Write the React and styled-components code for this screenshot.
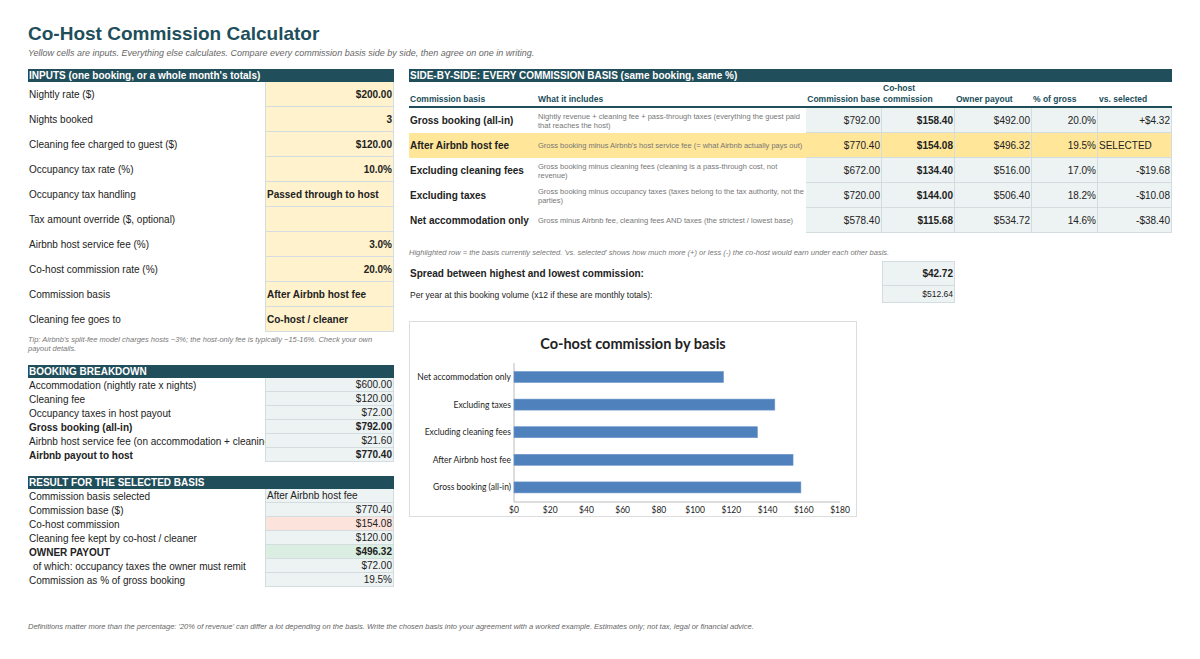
import React from "react";
import styled, { createGlobalStyle } from "styled-components";

const G = createGlobalStyle`
  body { margin: 0; background: #fff; font-family: "Liberation Sans", Arial, sans-serif; color: #222; }
`;
const TEAL = "#204e5a";
const BORDER = "#d3dde0";

const Page = styled.div`
  width: 1200px; height: 659px; box-sizing: border-box; padding: 23px 28px 0 28px; position: relative;
`;
const Title = styled.h1`
  margin: 0; font-size: 19px; font-weight: bold; color: ${TEAL}; line-height: 22px;
`;
const Sub = styled.div`
  font-size: 9px; font-style: italic; color: #666; margin-top: 3px; line-height: 11px;
`;
const Cols = styled.div`
  display: flex; gap: 15px; margin-top: 10px; align-items: flex-start;
`;
const Left = styled.div` width: 366px; `;
const Right = styled.div` width: 763px; `;
const Bar = styled.div`
  background: ${TEAL}; color: #fff; font-weight: bold; font-size: 10px; height: 13px; line-height: 13px; padding-left: 1px;
`;
const Row = styled.div`
  display: grid; grid-template-columns: 237px 129px; height: ${p => p.h}px; align-items: center; font-size: ${p => p.fs || 10}px;
`;
const Label = styled.div`
  padding-left: 1px; font-weight: ${p => p.bold ? "bold" : "normal"}; padding-left: ${p => p.indent ? 5 : 1}px; white-space: nowrap;
`;
const Val = styled.div`
  height: 100%; box-sizing: border-box; display: flex; align-items: center; justify-content: ${p => p.leftAlign ? "flex-start" : "flex-end"};
  background: ${p => p.bg}; border: 1px solid ${BORDER}; border-top: none; padding: 0 1px;
  font-weight: ${p => p.bold ? "bold" : "normal"}; white-space: nowrap;
`;
const Tip = styled.div`
  font-size: 7.5px; font-style: italic; color: #777; line-height: 9px; margin-top: 3px; height: 25px;
`;
const Gap = styled.div` height: ${p => p.h}px; `;

const inputs = [
  ["Nightly rate ($)", "$200.00"], ["Nights booked", "3"], ["Cleaning fee charged to guest ($)", "$120.00"],
  ["Occupancy tax rate (%)", "10.0%"], ["Occupancy tax handling", "Passed through to host", true],
  ["Tax amount override ($, optional)", ""], ["Airbnb host service fee (%)", "3.0%"],
  ["Co-host commission rate (%)", "20.0%"], ["Commission basis", "After Airbnb host fee", true],
  ["Cleaning fee goes to", "Co-host / cleaner", true],
];
const breakdown = [
  ["Accommodation (nightly rate x nights)", "$600.00"], ["Cleaning fee", "$120.00"],
  ["Occupancy taxes in host payout", "$72.00"], ["Gross booking (all-in)", "$792.00", true],
  ["Airbnb host service fee (on accommodation + cleaning)", "$21.60"], ["Airbnb payout to host", "$770.40", true],
];
const CALC = "#edf3f3";
const result = [
  ["Commission basis selected", "After Airbnb host fee", false, CALC, true],
  ["Commission base ($)", "$770.40", false, CALC],
  ["Co-host commission", "$154.08", false, "#fce3dc"],
  ["Cleaning fee kept by co-host / cleaner", "$120.00", false, CALC],
  ["OWNER PAYOUT", "$496.32", true, "#dbeee2"],
  ["of which: occupancy taxes the owner must remit", "$72.00", false, CALC, false, true],
  ["Commission as % of gross booking", "19.5%", false, CALC],
];

const TW = "128px 269px 76px 73px 77px 66px 74px";
const THead = styled.div`
  display: grid; grid-template-columns: ${TW}; height: 26px; align-items: end; font-size: 8.5px; font-weight: bold; color: ${TEAL};
  border-bottom: 2px solid ${TEAL}; box-sizing: border-box; padding-bottom: 1px;
`;
const TH = styled.div` text-align: ${p => p.right ? "right" : "left"}; padding-right: 2px; line-height: 11px; padding-left: ${p => p.right ? 0 : 1}px; `;
const TRow = styled.div`
  display: grid; grid-template-columns: ${TW}; height: 25px; background: ${p => p.sel ? "#ffe699" : "transparent"};
`;
const TC = styled.div`
  display: flex; align-items: center; box-sizing: border-box; font-size: ${p => p.fs || 10}px;
  justify-content: ${p => p.right ? "flex-end" : "flex-start"}; padding: 0 1px;
  font-weight: ${p => p.bold ? "bold" : "normal"}; color: ${p => p.muted ? "#777" : "#222"}; line-height: 9px;
  background: ${p => p.calc && !p.sel ? CALC : "transparent"};
  border-right: ${p => p.calc ? `1px solid ${BORDER}` : "none"}; border-bottom: ${p => p.calc ? `1px solid ${BORDER}` : "none"};
  white-space: ${p => p.wrap ? "normal" : "nowrap"};
`;
const rows = [
  ["Gross booking (all-in)", "Nightly revenue + cleaning fee + pass-through taxes (everything the guest paid that reaches the host)", "$792.00", "$158.40", "$492.00", "20.0%", "+$4.32"],
  ["After Airbnb host fee", "Gross booking minus Airbnb's host service fee (= what Airbnb actually pays out)", "$770.40", "$154.08", "$496.32", "19.5%", "SELECTED"],
  ["Excluding cleaning fees", "Gross booking minus cleaning fees (cleaning is a pass-through cost, not revenue)", "$672.00", "$134.40", "$516.00", "17.0%", "-$19.68"],
  ["Excluding taxes", "Gross booking minus occupancy taxes (taxes belong to the tax authority, not the parties)", "$720.00", "$144.00", "$506.40", "18.2%", "-$10.08"],
  ["Net accommodation only", "Gross minus Airbnb fee, cleaning fees AND taxes (the strictest / lowest base)", "$578.40", "$115.68", "$534.72", "14.6%", "-$38.40"],
];
const Note = styled.div` font-size: 7.5px; font-style: italic; color: #777; margin-top: 15px; height: 13px; `;
const SRow = styled.div`
  display: grid; grid-template-columns: 473px 73px; height: ${p => p.h}px; font-size: ${p => p.fs}px; font-weight: ${p => p.bold ? "bold" : "normal"};
`;
const SVal = styled.div`
  background: ${CALC}; border: 1px solid ${BORDER}; ${p => p.first ? "" : "border-top: none;"} display: flex; align-items: center; justify-content: flex-end; padding-right: 1px; box-sizing: border-box;
`;
const SLab = styled.div` display: flex; align-items: center; padding-left: 1px; `;
const ChartBox = styled.div`
  width: 448px; height: 196px; margin-top: 18px; border: 1px solid #ddd; box-sizing: border-box; position: relative;
`;
const ChartTitle = styled.div`
  text-align: center; font-family: Lato, "Open Sans", sans-serif; font-weight: bold; font-size: 14.5px; margin-top: 13px;
`;
const Footer = styled.div`
  position: absolute; left: 28px; top: 622px; font-size: 7.5px; font-style: italic; color: #666;
`;

const bars = [["Net accommodation only", 115.68], ["Excluding taxes", 144], ["Excluding cleaning fees", 134.4], ["After Airbnb host fee", 154.08], ["Gross booking (all-in)", 158.4]];

function Chart() {
  const x0 = 104, k = 326 / 180;
  return (
    <ChartBox>
      <ChartTitle>Co-host commission by basis</ChartTitle>
      <svg width="448" height="196" style={{ position: "absolute", left: 0, top: 0 }} fontFamily="Lato, sans-serif" fontSize="8.5">
        <line x1={x0} y1={41} x2={x0} y2={180} stroke="#bbb" />
        <line x1={x0} y1={180} x2={x0 + 326} y2={180} stroke="#bbb" />
        {bars.map(([n, v], i) => {
          const cy = 55 + i * 27.6;
          return (
            <g key={n}>
              <rect x={x0} y={cy - 5.5} width={v * k} height={11} fill="#4f81bd" stroke="#6f97cc" strokeWidth="0.6" />
              <text x={x0 - 3} y={cy + 3} textAnchor="end" fill="#222">{n}</text>
            </g>
          );
        })}
        {[0, 20, 40, 60, 80, 100, 120, 140, 160, 180].map(t => (
          <text key={t} x={x0 + t * k} y={191} textAnchor="middle" fill="#222">${t}</text>
        ))}
      </svg>
    </ChartBox>
  );
}

export default function App() {
  return (
    <Page>
      <G />
      <Title>Co-Host Commission Calculator</Title>
      <Sub>Yellow cells are inputs. Everything else calculates. Compare every commission basis side by side, then agree on one in writing.</Sub>
      <Cols>
        <Left>
          <Bar>INPUTS (one booking, or a whole month's totals)</Bar>
          {inputs.map(([l, v, b]) => (
            <Row key={l} h={25}>
              <Label>{l}</Label>
              <Val bg="#fff2cc" bold leftAlign={b}>{v}</Val>
            </Row>
          ))}
          <Tip>Tip: Airbnb's split-fee model charges hosts ~3%; the host-only fee is typically ~15-16%. Check your own payout details.</Tip>
          <Gap h={5} />
          <Bar>BOOKING BREAKDOWN</Bar>
          {breakdown.map(([l, v, b]) => (
            <Row key={l} h={14}>
              <Label bold={b}>{l}</Label>
              <Val bg={CALC} bold={b}>{v}</Val>
            </Row>
          ))}
          <Gap h={14} />
          <Bar>RESULT FOR THE SELECTED BASIS</Bar>
          {result.map(([l, v, b, bg, la, ind]) => (
            <Row key={l} h={14}>
              <Label bold={b} indent={ind}>{l}</Label>
              <Val bg={bg} bold={b} leftAlign={la}>{v}</Val>
            </Row>
          ))}
        </Left>
        <Right>
          <Bar>SIDE-BY-SIDE: EVERY COMMISSION BASIS (same booking, same %)</Bar>
          <THead>
            <TH>Commission basis</TH><TH>What it includes</TH><TH right>Commission base</TH>
            <TH>Co-host<br />commission</TH><TH>Owner payout</TH><TH>% of gross</TH><TH>vs. selected</TH>
          </THead>
          {rows.map((r, i) => {
            const sel = i === 1;
            return (
              <TRow key={r[0]} sel={sel}>
                <TC bold>{r[0]}</TC>
                <TC muted fs={7.5} wrap>{r[1]}</TC>
                <TC calc sel={sel} right>{r[2]}</TC>
                <TC calc sel={sel} right bold>{r[3]}</TC>
                <TC calc sel={sel} right>{r[4]}</TC>
                <TC calc sel={sel} right>{r[5]}</TC>
                {sel ? <TC calc sel>{r[6]}</TC> : <TC calc right>{r[6]}</TC>}
              </TRow>
            );
          })}
          <Note>Highlighted row = the basis currently selected. 'vs. selected' shows how much more (+) or less (-) the co-host would earn under each other basis.</Note>
          <SRow h={25} fs={10} bold><SLab>Spread between highest and lowest commission:</SLab><SVal first>$42.72</SVal></SRow>
          <SRow h={17} fs={8.5}><SLab>Per year at this booking volume (x12 if these are monthly totals):</SLab><SVal>$512.64</SVal></SRow>
          <Chart />
        </Right>
      </Cols>
      <Footer>Definitions matter more than the percentage: '20% of revenue' can differ a lot depending on the basis. Write the chosen basis into your agreement with a worked example. Estimates only; not tax, legal or financial advice.</Footer>
    </Page>
  );
}
